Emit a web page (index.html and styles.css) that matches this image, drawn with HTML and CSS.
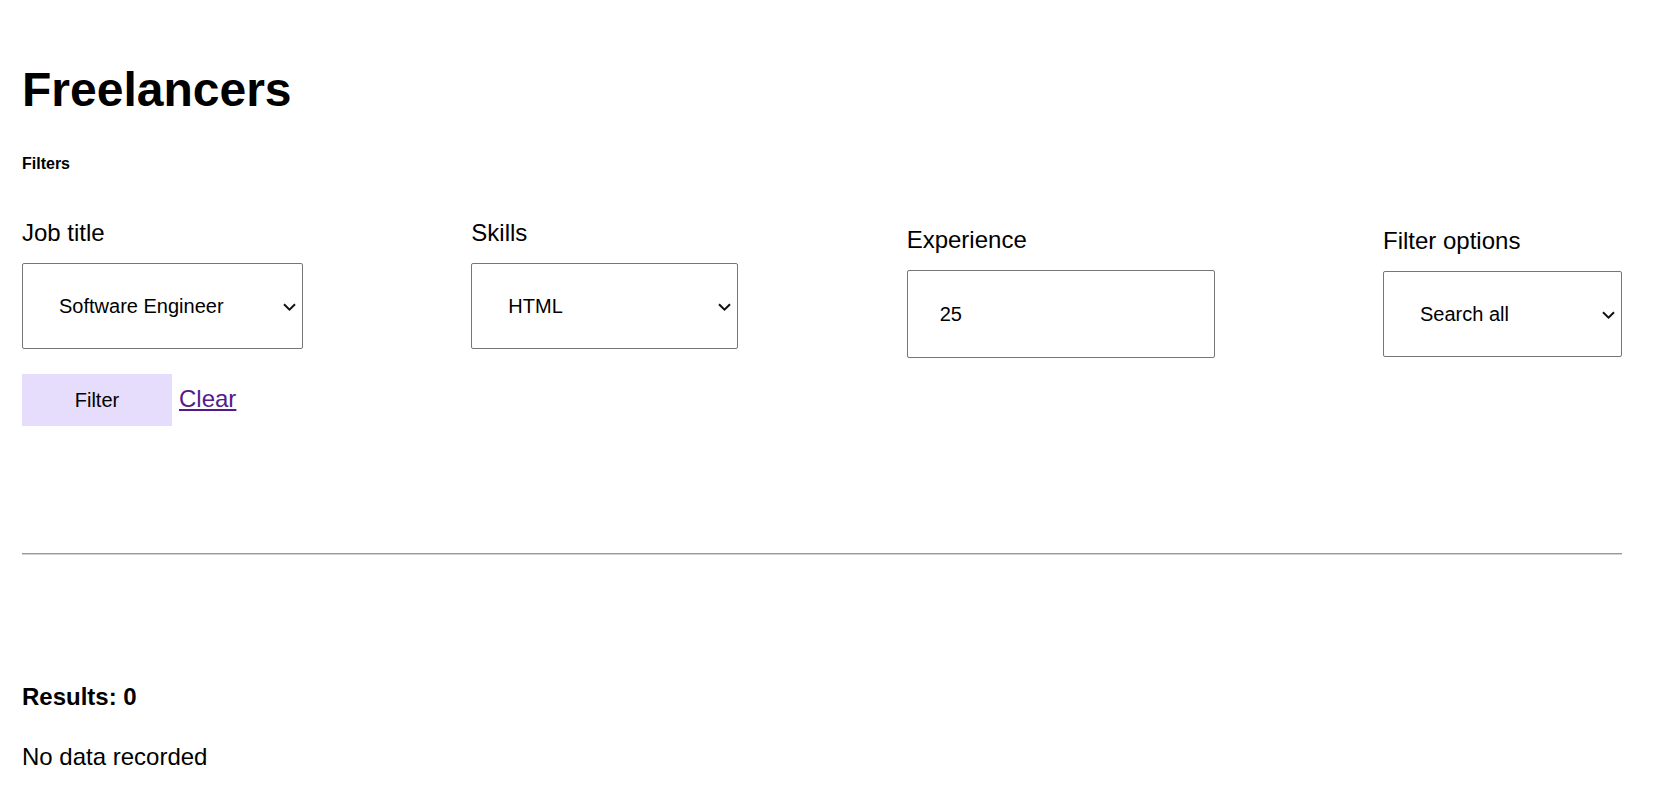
FILE: index.html
```html
<!DOCTYPE html>
<html lang="en">
<head>
<meta charset="utf-8">
<title>Freelancers</title>
<link rel="stylesheet" href="styles.css">
</head>
<body>
<main class="page">
  <h1 class="title">Freelancers</h1>
  <h6 class="filters-title">Filters</h6>
  <form class="filters">
    <div class="filters-row">
      <div class="field">
        <label class="field-label" for="job">Job title</label>
        <div class="select-wrap select-job">
          <select id="job" class="select">
            <option>Software Engineer</option>
          </select>
          <svg class="chevron" width="13" height="8" viewBox="0 0 13 8" aria-hidden="true"><path d="M1 1.2 L6.5 6.6 L12 1.2" fill="none" stroke="#111" stroke-width="2"/></svg>
        </div>
      </div>
      <div class="field">
        <label class="field-label" for="skills">Skills</label>
        <div class="select-wrap select-skills">
          <select id="skills" class="select">
            <option>HTML</option>
          </select>
          <svg class="chevron" width="13" height="8" viewBox="0 0 13 8" aria-hidden="true"><path d="M1 1.2 L6.5 6.6 L12 1.2" fill="none" stroke="#111" stroke-width="2"/></svg>
        </div>
      </div>
      <div class="field field-exp">
        <label class="field-label" for="exp">Experience</label>
        <input id="exp" class="input" type="text" value="25">
      </div>
      <div class="field field-opts">
        <label class="field-label" for="opts">Filter options</label>
        <div class="select-wrap select-opts">
          <select id="opts" class="select">
            <option>Search all</option>
          </select>
          <svg class="chevron" width="13" height="8" viewBox="0 0 13 8" aria-hidden="true"><path d="M1 1.2 L6.5 6.6 L12 1.2" fill="none" stroke="#111" stroke-width="2"/></svg>
        </div>
      </div>
    </div>
    <div class="actions">
      <button type="button" class="btn-filter">Filter</button>
      <a class="clear-link" href="#">Clear</a>
    </div>
  </form>
  <hr class="divider">
  <p class="results">Results: 0</p>
  <p class="no-data">No data recorded</p>
</main>
</body>
</html>
```
FILE: styles.css
```css
html, body {
  margin: 0;
  padding: 0;
  background: #fff;
}

body {
  font-family: "Liberation Sans", Arial, sans-serif;
  color: #000;
}

.page {
  width: 1600px;
  padding-left: 22px;
  padding-top: 62px;
}

.title {
  margin: 0;
  font-size: 48px;
  line-height: 56px;
  font-weight: 700;
}

.filters-title {
  margin: 37px 0 0;
  font-size: 16px;
  line-height: 18px;
  font-weight: 700;
}

.filters {
  margin: 46px 0 0;
}

.filters-row {
  display: flex;
  justify-content: space-between;
  align-items: flex-start;
}

.field {
  display: flex;
  flex-direction: column;
}

.field-exp {
  margin-top: 7px;
}

.field-opts {
  margin-top: 8px;
}

.field-label {
  font-size: 24px;
  line-height: 28px;
  margin-bottom: 16px;
}

.select-wrap {
  position: relative;
}

.select-job { width: 281px; }
.select-skills { width: 267px; }
.select-opts { width: 239px; }

.select {
  -webkit-appearance: none;
  appearance: none;
  box-sizing: border-box;
  width: 100%;
  height: 86px;
  margin: 0;
  padding: 0 30px 0 36px;
  border: 1px solid #767676;
  border-radius: 2px;
  background: #fff;
  color: #000;
  font-family: "Liberation Sans", Arial, sans-serif;
  font-size: 20px;
}

.chevron {
  position: absolute;
  right: 7px;
  top: 50%;
  margin-top: -3px;
  pointer-events: none;
}

.input {
  box-sizing: border-box;
  width: 308px;
  height: 88px;
  margin: 0;
  padding: 0 0 0 32px;
  border: 1px solid #767676;
  border-radius: 2px;
  background: #fff;
  color: #000;
  font-family: "Liberation Sans", Arial, sans-serif;
  font-size: 20px;
}

.actions {
  display: flex;
  align-items: baseline;
  gap: 6px;
  margin-top: 16px;
}

.btn-filter {
  width: 150px;
  height: 52px;
  margin: 0;
  padding: 0;
  border: none;
  border-radius: 0;
  background: #e6ddfd;
  color: #000;
  font-family: "Liberation Sans", Arial, sans-serif;
  font-size: 20px;
  line-height: 23px;
}

.clear-link {
  margin-left: 1px;
  font-size: 24px;
  line-height: 28px;
  color: #551a8b;
  text-decoration: underline;
}

.divider {
  width: 1600px;
  height: 0;
  margin: 127px 0 0;
  border: none;
  border-top: 1px solid #999;
  border-bottom: 1px solid #d4d4d4;
}

.results {
  margin: 128px 0 0;
  font-size: 24px;
  line-height: 28px;
  font-weight: 700;
}

.no-data {
  margin: 32px 0 0;
  font-size: 24px;
  line-height: 28px;
}
```
